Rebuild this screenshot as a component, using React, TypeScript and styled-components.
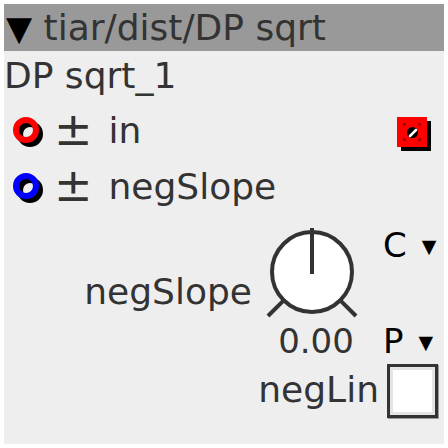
import React from "react";
import styled, { createGlobalStyle } from "styled-components";

const GlobalStyle = createGlobalStyle`
  html, body {
    margin: 0;
    padding: 0;
    background: #fff;
  }
  body {
    font-family: "DejaVu Sans", "Noto Sans", sans-serif;
  }
`;

const Panel = styled.div`
  margin: 4px;
  width: 440px;
  height: 440px;
  background: #eee;
  color: #333;
  font-size: 36px;
  overflow: hidden;
`;

const Header = styled.div`
  height: 47px;
  line-height: 47px;
  background: #999;
  padding-left: 2px;
  white-space: nowrap;
`;

const Caret = styled.span<{ size: number }>`
  font-size: ${(p) => p.size}px;
  color: #000;
`;

const Title = styled.div`
  line-height: 50px;
  white-space: nowrap;
`;

const Ports = styled.div`
  padding-top: 2px;
`;

const PortRow = styled.div`
  display: flex;
  align-items: flex-start;
  height: 56px;
  line-height: 56px;
  white-space: nowrap;
`;

const RingSvg = styled.svg`
  margin: 13px 0 0 8px;
  flex: none;
`;

const Sign = styled.span`
  font-size: 46px;
  line-height: 52px;
  margin: 0 16px 0 8px;
`;

const Spacer = styled.div`
  flex: 1;
`;

const JackSvg = styled.svg`
  margin: 14px 13px 0 0;
  flex: none;
`;

const Controls = styled.div`
  display: grid;
  grid-template-columns: 260px 96px 84px;
  grid-template-rows: 96px 42px 58px;
  padding-top: 9px;
  line-height: 42px;
`;

const KnobLabel = styled.div`
  align-self: end;
  justify-self: end;
  padding-right: 12px;
  margin-bottom: 7px;
`;

const Value = styled.div`
  justify-self: center;
  padding-left: 8px;
  font-size: 34px;
`;

const Select = styled.div`
  align-self: start;
  padding-left: 23px;
  color: #000;
  font-size: 34px;
  white-space: nowrap;
`;

const Arrow = styled.span`
  font-size: 19px;
  margin-left: 15px;
  vertical-align: 4px;
`;

const ToggleRow = styled.div`
  grid-column: 1 / -1;
  display: flex;
  justify-content: flex-end;
  align-items: flex-start;
  gap: 8px;
  padding-right: 6px;
`;

const ToggleLabel = styled.span`
  margin-top: 7px;
`;

const Checkbox = styled.div`
  margin-top: 2px;
  width: 45px;
  height: 48px;
  border: 3px solid #333;
  background: #fff;
  box-shadow: inset 0 0 0 3px #e4e4e4, 1px 1px 0 #999;
`;

const PortRing: React.FC<{ color: string }> = ({ color }) => (
  <RingSvg width="34" height="34" viewBox="0 0 34 34">
    <circle cx="18" cy="18" r="10" fill="none" stroke="#000" strokeWidth="6" />
    <circle cx="14" cy="14" r="10" fill="none" stroke={color} strokeWidth="6" />
  </RingSvg>
);

const OutJack: React.FC = () => (
  <JackSvg width="34" height="34" viewBox="0 0 34 34">
    <rect x="4" y="4" width="30" height="30" fill="#000" />
    <rect x="0" y="0" width="30" height="30" fill="#f00" />
    <g stroke="#800" strokeWidth="1.5" fill="none">
      <path d="M7 9V7h2M21 7h2v2M23 21v2h-2M9 23H7v-2" />
    </g>
    <circle cx="15.5" cy="15.5" r="5.5" fill="#000" />
    <path d="M13 19L19 13" stroke="#fff" strokeWidth="2.5" strokeLinecap="round" />
  </JackSvg>
);

const Knob: React.FC = () => (
  <svg width="96" height="96" viewBox="0 0 96 96">
    <g stroke="#333" strokeWidth="4" fill="none">
      <line x1="19.7" y1="76.3" x2="4" y2="92" />
      <line x1="76.3" y1="76.3" x2="92" y2="92" />
    </g>
    <circle cx="48" cy="48" r="40" fill="#fff" stroke="#333" strokeWidth="4" />
    <line x1="48" y1="4" x2="48" y2="50" stroke="#333" strokeWidth="4" />
  </svg>
);

export default function App() {
  return (
    <>
      <GlobalStyle />
      <Panel>
        <Header>
          <Caret size={34}>▼</Caret> tiar/dist/DP sqrt
        </Header>
        <Title>DP sqrt_1</Title>
        <Ports>
          <PortRow>
            <PortRing color="#f00" />
            <Sign>±</Sign>
            <span>in</span>
            <Spacer />
            <OutJack />
          </PortRow>
          <PortRow>
            <PortRing color="#00f" />
            <Sign>±</Sign>
            <span>negSlope</span>
          </PortRow>
        </Ports>
        <Controls>
          <KnobLabel>negSlope</KnobLabel>
          <Knob />
          <Select>
            C<Arrow>▼</Arrow>
          </Select>
          <div />
          <Value>0.00</Value>
          <Select>
            P<Arrow>▼</Arrow>
          </Select>
          <ToggleRow>
            <ToggleLabel>negLin</ToggleLabel>
            <Checkbox />
          </ToggleRow>
        </Controls>
      </Panel>
    </>
  );
}
